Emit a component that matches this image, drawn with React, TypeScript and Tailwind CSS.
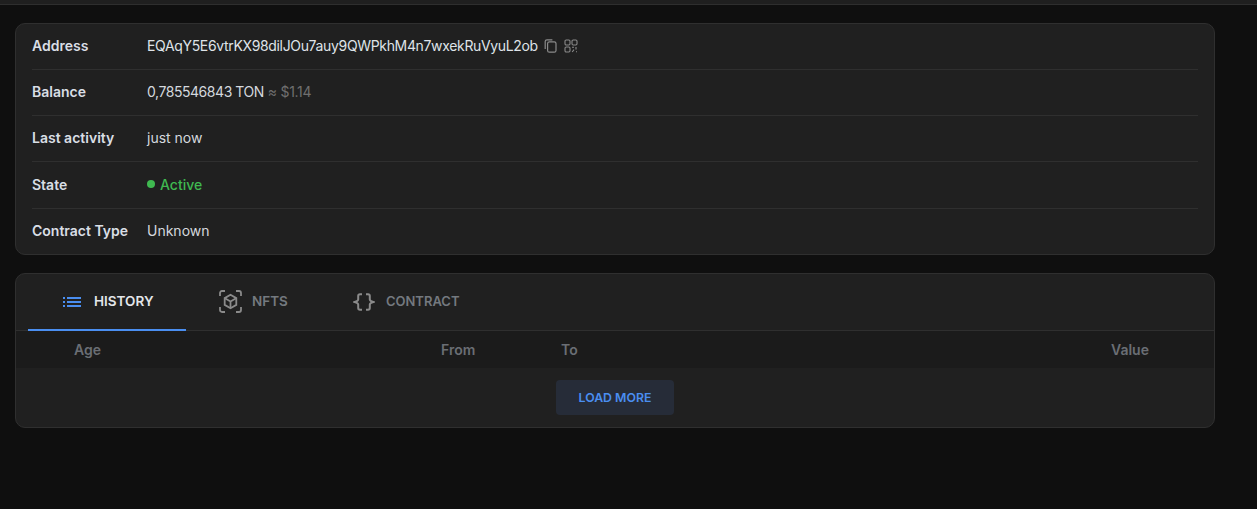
const rows = [
  {
    label: 'Balance',
    value: (
      <>
        <span className="tracking-[-0.45px]">0,785546843 TON</span>
        <span className="text-[#6f6f6f] tracking-[-0.3px] ml-[4px]">≈ $1.14</span>
      </>
    ),
    height: 'h-[46px] pb-[2px] border-b border-[#2f2f2f]',
  },
  { label: 'Last activity', value: <span>just now</span>, height: 'h-[46px] pb-[2px] border-b border-[#2f2f2f]' },
  {
    label: 'State',
    value: (
      <span className="flex items-center gap-[5px] font-medium text-[#3fb950]">
        <span className="w-[8px] h-[8px] rounded-full bg-[#3fb950]" />
        Active
      </span>
    ),
    height: 'h-[47px] pb-[2px] border-b border-[#2f2f2f]',
  },
  { label: 'Contract Type', value: <span>Unknown</span>, height: 'h-[45px] pb-[2px]' },
];

function CopyIcon() {
  return (
    <svg width="13" height="14" viewBox="0 0 13 14" fill="none" stroke="#8a8a8a" strokeWidth="1.2">
      <rect x="3.600" y="2.800" width="8.400" height="10.400" rx="1.800" />
      <path d="M1.200 10V2.600C1.200 1.500 1.900 .8 3 .8H8.400" />
    </svg>
  );
}

function QrIcon() {
  return (
    <svg width="14" height="14" viewBox="0 0 14 14" fill="none" stroke="#8a8a8a" strokeWidth="1.1">
      <rect x="1" y="1" width="5" height="5" rx="1.200" />
      <rect x="8" y="1" width="5" height="5" rx="1.200" />
      <rect x="1" y="8" width="5" height="5" rx="1.200" />
      <path d="M8 8.200h2M12 8v2.400M8.200 13l1.800-2.400M12 12.800h1" />
    </svg>
  );
}

function ListIcon() {
  return (
    <svg width="18" height="12" viewBox="0 0 18 12" fill="#4a8ef0">
      <rect x="0" y="1" width="2" height="2" />
      <rect x="0" y="5" width="2" height="2" />
      <rect x="0" y="9" width="2" height="2" />
      <rect x="4" y="1" width="14" height="2" />
      <rect x="4" y="5" width="14" height="2" />
      <rect x="4" y="9" width="14" height="2" />
    </svg>
  );
}

function NftIcon() {
  return (
    <svg width="23" height="23" viewBox="0 0 23 23" fill="none" stroke="#8a8a8a" strokeWidth="1.800">
      <path d="M1 6V3c0-1.200.8-2 2-2h3M17 1h3c1.200 0 2 .8 2 2v3M22 17v3c0 1.200-.8 2-2 2h-3M6 22H3c-1.200 0-2-.8-2-2v-3" />
      <path d="M11.500 4.800l5.800 3.300v6.800l-5.800 3.300-5.800-3.300V8.100z" />
      <path d="M5.900 8.200l5.600 3.300 5.600-3.300M11.500 11.500v6.500" />
    </svg>
  );
}

function BracesIcon() {
  return (
    <svg width="22" height="18" viewBox="0 0 22 18" fill="none" stroke="#8a8a8a" strokeWidth="2">
      <path d="M9 1.200H7C5.800 1.200 5.200 1.900 5.200 3v3.400C5.200 7.700 3.400 8.500 1.600 9c1.800.5 3.600 1.300 3.600 2.600V15c0 1.100.6 1.800 1.800 1.800h2" />
      <path d="M13 1.200h2c1.200 0 1.800.7 1.800 1.800v3.400c0 1.300 1.800 2.100 3.600 2.600-1.800.5-3.600 1.300-3.600 2.600V15c0 1.100-.6 1.800-1.800 1.800h-2" />
    </svg>
  );
}

export default function App() {
  return (
    <div className="w-[1257px] h-[509px] overflow-hidden bg-[#0f0f0f] font-['Inter',sans-serif]">
      <div className="h-[5px] bg-[#1f1f1f] border-b border-[#2e2e2e]" />
      <div className="w-[1200px] ml-[15px] mt-[18px] flex flex-col gap-[18px]">
        {/* Info card */}
        <div className="h-[232px] rounded-[10px] border border-[#2f2f2f] bg-[#202020] px-[16px] text-[14px] text-[#d4d8de]">
          <div className="flex items-center h-[46px] pb-[2px] border-b border-[#2f2f2f]">
            <div className="w-[115px] font-semibold text-[#d9dee5]">Address</div>
            <span className="text-[#dfe3e8] tracking-[-0.34px]">EQAqY5E6vtrKX98dilJOu7auy9QWPkhM4n7wxekRuVyuL2ob</span>
            <span className="ml-[6px] flex items-center gap-[7px]">
              <CopyIcon />
              <QrIcon />
            </span>
          </div>
          {rows.map((row) => (
            <div key={row.label} className={`flex items-center ${row.height}`}>
              <div className="w-[115px] font-semibold text-[#d9dee5]">{row.label}</div>
              {row.value}
            </div>
          ))}
        </div>

        {/* Tabs card */}
        <div className="h-[155px] rounded-[10px] border border-[#2f2f2f] bg-[#202020] overflow-hidden">
          <div className="flex h-[57px] border-b border-[#2f2f2f] pl-[12px] text-[13px] font-semibold">
            <div className="relative w-[158px] flex items-center pl-[35px] pb-[1px] gap-[13px] text-[13.500px] text-[#e4e6ea]">
              <ListIcon />
              HISTORY
              <div className="absolute left-0 right-0 bottom-[-1px] h-[2px] bg-[#4a8ef0]" />
            </div>
            <div className="flex items-center ml-[33px] pb-[1px] gap-[10px] text-[13.500px] text-[#74797f]">
              <NftIcon />
              NFTS
            </div>
            <div className="flex items-center ml-[65px] gap-[11px] text-[#74797f]">
              <BracesIcon />
              CONTRACT
            </div>
          </div>
          <div className="flex items-center h-[37px] pb-[1px] bg-[#1b1b1b] text-[14px] font-semibold text-[#6a6e74]">
            <div className="w-[425px] pl-[58px]">Age</div>
            <div className="w-[120px]">From</div>
            <div className="w-[550px]">To</div>
            <div>Value</div>
          </div>
          <div className="flex justify-center pt-[12px]">
            <button className="w-[118px] h-[35px] pt-[1px] rounded-[4px] bg-[#262c38] text-[12.300px] font-semibold text-[#4a8ef0]">
              LOAD MORE
            </button>
          </div>
        </div>
      </div>
    </div>
  );
}
